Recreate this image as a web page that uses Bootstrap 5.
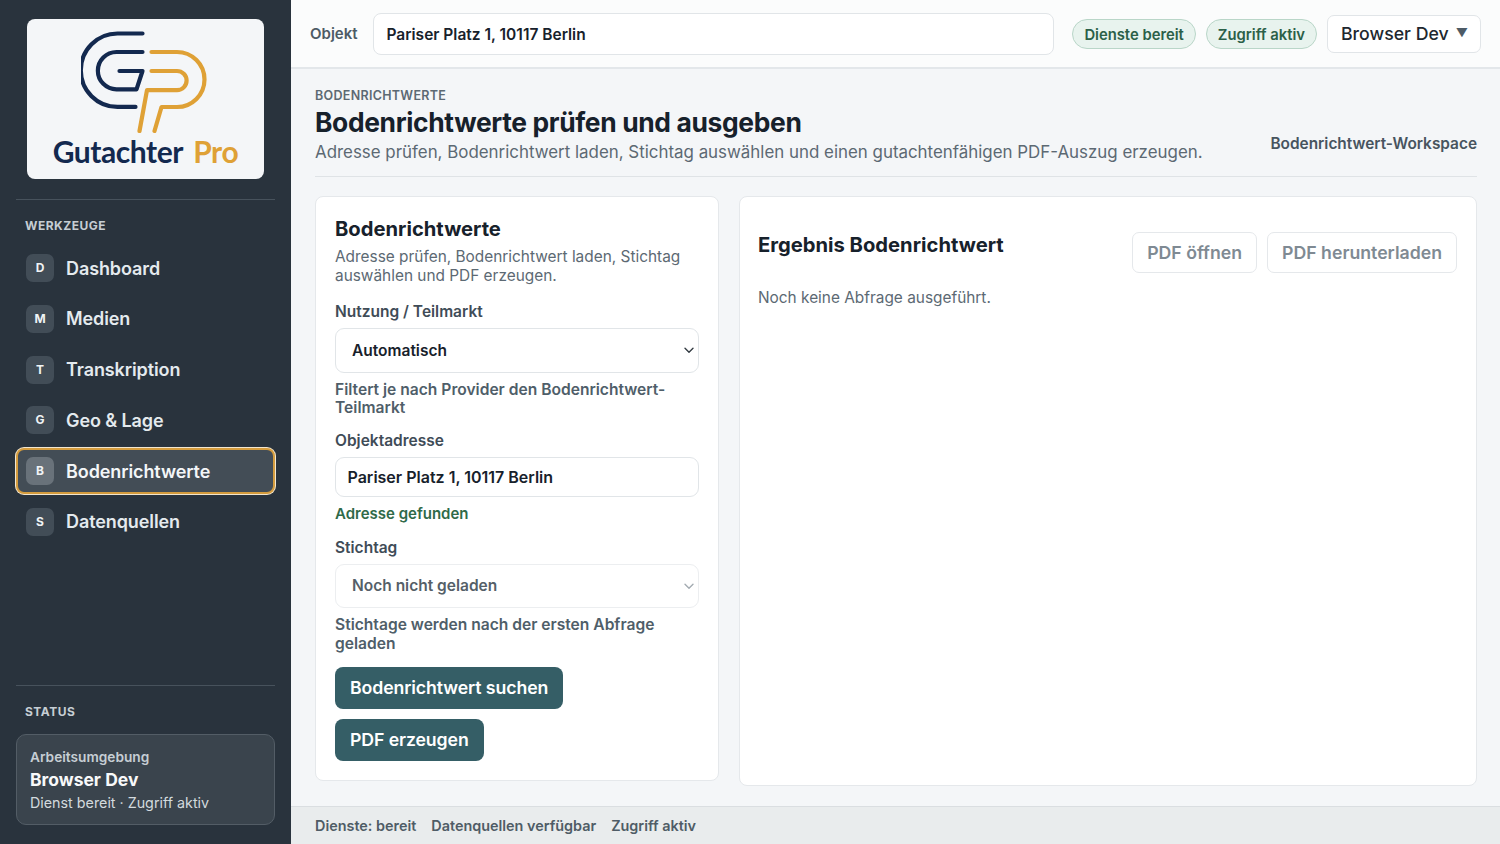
<!DOCTYPE html>
<html lang="de">
<head>
  <meta charset="UTF-8" />
  <meta name="viewport" content="width=device-width, initial-scale=1" />
  <title>Gutachter Pro - Bodenrichtwerte</title>
  <link href="https://cdn.jsdelivr.net/npm/bootstrap@5.3.2/dist/css/bootstrap.min.css" rel="stylesheet" />
  <style>
    html, body { height: 100%; }
    body { font-family: Inter, "Liberation Sans", sans-serif; background: #f4f6f8; color: #17212b; overflow: hidden; }
    .app-shell { height: 844px; }

    /* Seitenleiste */
    .side-bar { width: 291px; flex: none; background: #29333d; padding: 19px 16px 19px; }
    .logo-box { width: 237px; height: 160px; margin-left: 11px; background: #f4f6f8; border-radius: 8px; padding-top: 12px; }
    .logo-box svg { display: block; margin: 0 auto; }
    .logo-text { font-family: Lato, sans-serif; font-weight: 700; font-size: 30px; line-height: 36px; color: #13294f; letter-spacing: -.45px; white-space: nowrap; }
    .logo-text span { color: #dfa136; margin-left: 4px; font-weight: 700; }
    .side-rule { border-top: 1px solid #47525c; height: 1px; }
    .rule-top { margin-top: 20px; margin-bottom: 18px; }
    .rule-low { margin-top: auto; margin-bottom: 18px; }
    .side-head { font-size: 12px; line-height: 16px; font-weight: 700; letter-spacing: .5px; color: #c6ced4; padding-left: 9px; }
    .head-tools { margin-bottom: 11px; }
    .head-status { margin-bottom: 14px; }
    .side-link { display: flex; align-items: center; gap: 12px; height: 46px; padding-left: 10px; margin-bottom: 4.8px; border-radius: 8px; color: #e4eaee; font-size: 18px; font-weight: 600; text-decoration: none; letter-spacing: -.1px; }
    .side-link.is-active { height: 46px; background: #434d56; color: #f3f6f8; border: 2px solid #d49c3e; padding-left: 8px; box-shadow: 0 0 0 1px #f2e6cf; }
    .side-chip { width: 28px; height: 28px; border-radius: 7px; background: #424d57; color: #f0f3f5; font-size: 12px; font-weight: 700; display: flex; align-items: center; justify-content: center; }
    .is-active .side-chip { background: #69727a; }
    .status-box { background: #3a444d; border: 1px solid #535d66; border-radius: 10px; height: 91px; padding: 13px 13px; }
    .status-top { font-size: 13.7px; line-height: 18px; font-weight: 600; color: #c6ced4; }
    .status-name { font-size: 17.5px; line-height: 27px; font-weight: 700; color: #f8f9fa; }
    .status-sub { font-size: 14.3px; line-height: 20px; color: #d3dade; }

    /* Kopfzeile */
    .top-bar { height: 69px; flex: none; background: #fbfcfc; border-bottom: 2px solid #e3e7ea; padding: 0 19px; }
    .top-label { font-size: 15px; font-weight: 600; color: #4d5b66; width: 63px; padding-top: 2px; }
    .top-input.form-control { width: 681px; height: 42px; font-size: 15.5px; font-weight: 600; color: #17212b; border: 1px solid #e1e5e8; border-radius: 8px; padding: 2px 0 0 12.5px; background: #fff; }
    .state-pill { font-size: 14.8px; font-weight: 600; line-height: 28px; height: 30px; padding: 1px 11px 0; color: #2b6048; background: #e8f3ee; border: 1px solid #b9d6c8; border-radius: 15px; margin-right: 10px; }
    .env-btn { width: 154px; height: 38px; background: #fff; border: 1px solid #e1e5e8; border-radius: 7px; font-size: 17.7px; font-weight: 500; color: #20272e; padding: 2px 12px 0 13px; display: flex; align-items: center; justify-content: space-between; white-space: nowrap; }
    .env-btn span { font-size: 12px; color: #4d5b66; margin-top: -3px; }

    /* Inhalt */
    .work-area { padding: 19px 23px 20px 24px; min-height: 0; }
    .page-eyebrow { font-size: 12.5px; line-height: 16px; font-weight: 600; letter-spacing: .3px; color: #5c6973; }
    .page-title { font-size: 26.4px; line-height: 37px; font-weight: 700; letter-spacing: -.35px; color: #17212b; margin: 0; }
    .page-sub { font-size: 16.9px; line-height: 22px; color: #5c6973; margin: 0; }
    .page-tag { font-size: 15.4px; font-weight: 600; color: #47545f; white-space: nowrap; padding-bottom: 8px; }
    .page-head { border-bottom: 1px solid #dfe3e6; padding-bottom: 13px; margin-bottom: 19px; }
    .panel-row { column-gap: 20px; }
    .panel-left { width: 404px; flex: none; align-self: flex-start; height: 585px; }
    .panel-left, .panel-right { background: #fff; border: 1px solid #e5e8eb; border-radius: 8px; }
    .panel-left { padding: 19px 19px 0; }
    .panel-right { padding: 0 19px 0 18px; }
    .panel-title { font-size: 20.2px; line-height: 26px; font-weight: 700; color: #17212b; margin: 0; }
    .result-head { margin-top: 35px; }
    .result-head .panel-title { margin-top: -16px; }
    .panel-sub { font-size: 15.4px; line-height: 19px; color: #5c6973; margin: 5px 0 0; }
    .field-label { font-size: 15.5px; line-height: 19px; font-weight: 600; color: #3f4c57; margin-bottom: 7px; display: block; }
    .label-first { margin-top: 17px; }
    .label-addr { margin-top: 13px; }
    .label-date { margin-top: 15px; }
    .field-select.form-select { height: 44.5px; font-size: 15.5px; font-weight: 600; color: #17212b; border: 1px solid #e1e5e8; border-radius: 9px; padding-left: 16px; background-color: #fff;
      background-image: url("data:image/svg+xml,%3csvg xmlns='http://www.w3.org/2000/svg' viewBox='0 0 12 12'%3e%3cpath fill='none' stroke='%23333b42' stroke-width='1.4' stroke-linecap='round' stroke-linejoin='round' d='M2 4.2l4 4 4-4'/%3e%3c/svg%3e");
      background-position: right 3px center; background-size: 12px 12px; }
    .field-select.form-select:disabled { color: #555f68; background-color: #fff; border-color: #eceef0; opacity: 1;
      background-image: url("data:image/svg+xml,%3csvg xmlns='http://www.w3.org/2000/svg' viewBox='0 0 12 12'%3e%3cpath fill='none' stroke='%23a3abb1' stroke-width='1.4' stroke-linecap='round' stroke-linejoin='round' d='M2 4.2l4 4 4-4'/%3e%3c/svg%3e"); }
    .field-input.form-control { height: 40px; font-size: 16px; font-weight: 600; color: #17212b; border: 1px solid #e1e5e8; border-radius: 9px; padding-left: 11.5px; }
    .field-hint { font-size: 15.6px; line-height: 18.5px; font-weight: 600; color: #4f5e69; }
    .hint-use { margin-top: 8px; }
    .hint-date { margin-top: 8px; }
    .field-ok { font-size: 15px; line-height: 19px; font-weight: 600; color: #2f6a49; margin-top: 7px; }
    .action-stack { row-gap: 10px; margin-top: 14px; }
    .action-btn.btn { height: 42px; background: #355e66; border: 0; color: #fff; font-size: 17.7px; font-weight: 600; border-radius: 8px; padding: 0 15px; letter-spacing: -.1px; }
    .ghost-row { column-gap: 10px; }
    .ghost-btn.btn:disabled { height: 41px; background: #fff; border: 1px solid #e5e8eb; color: #7f8a93; font-size: 17.7px; font-weight: 600; border-radius: 7px; padding: 1px 14px 0; opacity: 1; }
    .empty-note { font-size: 15.4px; color: #5c6973; margin-top: 13px; }

    /* Fusszeile */
    .foot-bar { height: 38px; flex: none; background: #e9eced; border-top: 1px solid #dadee1; padding-left: 24px; font-size: 14.4px; font-weight: 600; color: #4f5c66; column-gap: 15px; }
  </style>
</head>
<body>
  <div class="app-shell d-flex">
    <!-- Seitenleiste -->
    <aside class="side-bar d-flex flex-column">
      <div class="logo-box text-center">
        <svg width="130" height="102" viewBox="82 31 130 102" fill="none" stroke-width="4.2" stroke-linecap="round" stroke-linejoin="round">
          <g stroke="#13294f">
            <path d="M143.5 33.5H118.5a36.7 36.7 0 0 0 0 73.4H136.5" />
            <path d="M143.5 52H117.5a18.6 18.6 0 0 0 0 37.3H137.5L143.5 71H120.5" />
          </g>
          <g stroke="#dfa136">
            <path d="M152.5 52H178a27.5 27.5 0 0 1 0 55H162.5L155.5 131" />
            <path d="M152.5 71H178a9.6 9.6 0 0 1 0 19.2H148L140.5 131" />
          </g>
        </svg>
        <div class="logo-text">Gutachter <span>Pro</span></div>
      </div>
      <div class="side-rule rule-top"></div>
      <div class="side-head head-tools">WERKZEUGE</div>
      <nav class="d-flex flex-column">
        <a href="#" class="side-link"><span class="side-chip">D</span>Dashboard</a>
        <a href="#" class="side-link"><span class="side-chip">M</span>Medien</a>
        <a href="#" class="side-link"><span class="side-chip">T</span>Transkription</a>
        <a href="#" class="side-link"><span class="side-chip">G</span>Geo &amp; Lage</a>
        <a href="#" class="side-link is-active"><span class="side-chip">B</span>Bodenrichtwerte</a>
        <a href="#" class="side-link"><span class="side-chip">S</span>Datenquellen</a>
      </nav>
      <div class="side-rule rule-low"></div>
      <div class="side-head head-status">STATUS</div>
      <div class="status-box">
        <div class="status-top">Arbeitsumgebung</div>
        <div class="status-name">Browser Dev</div>
        <div class="status-sub">Dienst bereit · Zugriff aktiv</div>
      </div>
    </aside>

    <div class="flex-grow-1 d-flex flex-column">
      <!-- Kopfzeile -->
      <header class="top-bar d-flex align-items-center">
        <span class="top-label">Objekt</span>
        <input class="form-control top-input" type="text" value="Pariser Platz 1, 10117 Berlin" />
        <span class="state-pill ms-auto">Dienste bereit</span>
        <span class="state-pill">Zugriff aktiv</span>
        <button class="env-btn" type="button">Browser Dev <span>▼</span></button>
      </header>

      <main class="work-area flex-grow-1 d-flex flex-column">
        <div class="page-head d-flex justify-content-between align-items-end">
          <div>
            <div class="page-eyebrow">BODENRICHTWERTE</div>
            <h1 class="page-title">Bodenrichtwerte prüfen und ausgeben</h1>
            <p class="page-sub">Adresse prüfen, Bodenrichtwert laden, Stichtag auswählen und einen gutachtenfähigen PDF-Auszug erzeugen.</p>
          </div>
          <div class="page-tag">Bodenrichtwert-Workspace</div>
        </div>

        <div class="d-flex panel-row flex-grow-1">
          <!-- Formular -->
          <section class="panel-left">
            <h2 class="panel-title">Bodenrichtwerte</h2>
            <p class="panel-sub">Adresse prüfen, Bodenrichtwert laden, Stichtag auswählen und PDF erzeugen.</p>
            <label class="field-label label-first">Nutzung / Teilmarkt</label>
            <select class="form-select field-select"><option>Automatisch</option></select>
            <div class="field-hint hint-use">Filtert je nach Provider den Bodenrichtwert-Teilmarkt</div>
            <label class="field-label label-addr">Objektadresse</label>
            <input class="form-control field-input" type="text" value="Pariser Platz 1, 10117 Berlin" />
            <div class="field-ok">Adresse gefunden</div>
            <label class="field-label label-date">Stichtag</label>
            <select class="form-select field-select" disabled><option>Noch nicht geladen</option></select>
            <div class="field-hint hint-date">Stichtage werden nach der ersten Abfrage geladen</div>
            <div class="d-flex flex-column align-items-start action-stack">
              <button class="btn action-btn" type="button">Bodenrichtwert suchen</button>
              <button class="btn action-btn" type="button">PDF erzeugen</button>
            </div>
          </section>

          <!-- Ergebnis -->
          <section class="panel-right flex-grow-1">
            <div class="d-flex justify-content-between align-items-center result-head">
              <h2 class="panel-title">Ergebnis Bodenrichtwert</h2>
              <div class="d-flex ghost-row">
                <button class="btn ghost-btn" type="button" disabled>PDF öffnen</button>
                <button class="btn ghost-btn" type="button" disabled>PDF herunterladen</button>
              </div>
            </div>
            <div class="empty-note">Noch keine Abfrage ausgeführt.</div>
          </section>
        </div>
      </main>

      <footer class="foot-bar d-flex align-items-center">
        <span>Dienste: bereit</span>
        <span>Datenquellen verfügbar</span>
        <span>Zugriff aktiv</span>
      </footer>
    </div>
  </div>
  <script src="https://cdn.jsdelivr.net/npm/bootstrap@5.3.2/dist/js/bootstrap.bundle.min.js"></script>
</body>
</html>
